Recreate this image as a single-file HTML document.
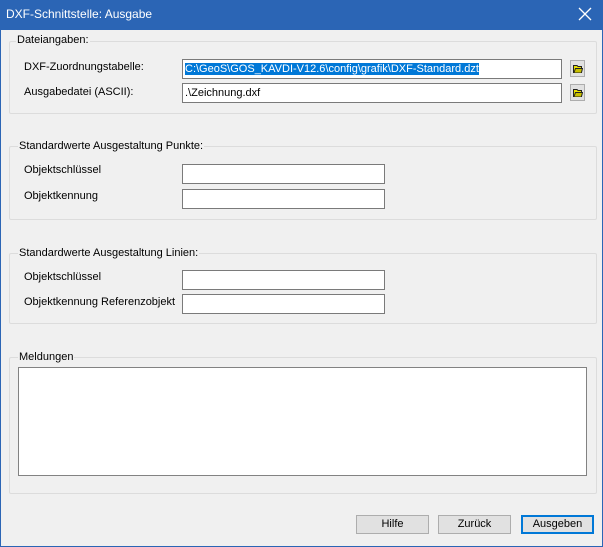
<!DOCTYPE html>
<html><head><style>
*{box-sizing:border-box;margin:0;padding:0}
body{width:603px;height:547px;overflow:hidden;background:#f0f0f0;font-family:"Liberation Sans",sans-serif;font-size:11px;color:#000;position:relative}
.frame{position:absolute;left:0;top:0;width:603px;height:547px;border:1px solid #2b65b5}
.title{position:absolute;left:0;top:0;width:603px;height:30px;background:#2b65b5;color:#fff;font-size:12px;line-height:28px;padding-left:6px}
.x{position:absolute;right:10px;top:6px;width:16px;height:16px}
.g{position:absolute;border:1px solid #dcdcdc;border-radius:2px}
.gl{position:absolute;background:#f0f0f0;padding:0 1px;line-height:13px}
.l{position:absolute;line-height:14px}
.in{position:absolute;background:#fff;border:1px solid #7a7a7a;height:20px;line-height:18px;padding-left:2px;white-space:nowrap;overflow:hidden}
.sel{background:#0078d7;color:#fff}
.fb{position:absolute;width:15px;height:17px;border:1px solid #adadad;background:#e1e1e1}
.fb svg{position:absolute;left:2px;top:3px}
.btn{position:absolute;top:515px;width:73px;height:19px;border:1px solid #adadad;background:#e1e1e1;text-align:center;line-height:17px}
</style></head><body>
<div class="frame"></div>
<div class="title">DXF-Schnittstelle: Ausgabe
<svg class="x" viewBox="0 0 16 16"><path d="M2 2L14 14M14 2L2 14" stroke="#fff" stroke-width="1.3"/></svg></div>

<div class="g" style="left:9px;top:41px;width:588px;height:73px"></div>
<div class="gl" style="left:16px;top:34px">Dateiangaben:</div>
<div class="l" style="left:24px;top:60px">DXF-Zuordnungstabelle:</div>
<div class="in" style="left:182px;top:59px;width:380px"><span class="sel">C:\GeoS\GOS_KAVDI-V12.6\config\grafik\DXF-Standard.dzt</span></div>
<div class="fb" style="left:570px;top:60px"><svg width="10" height="10" viewBox="0 0 10 10"><path d="M0.5 1.5H4L5 2.5H8.5V8.5H0.5Z" fill="#e8e000" stroke="#222"/><path d="M1 8.5L2.5 4.5H9.5L8.5 8.5" fill="#c8c000" stroke="#222"/></svg></div>
<div class="l" style="left:24px;top:85px">Ausgabedatei (ASCII):</div>
<div class="in" style="left:182px;top:83px;width:380px">.\Zeichnung.dxf</div>
<div class="fb" style="left:570px;top:84px"><svg width="10" height="10" viewBox="0 0 10 10"><path d="M0.5 1.5H4L5 2.5H8.5V8.5H0.5Z" fill="#e8e000" stroke="#222"/><path d="M1 8.5L2.5 4.5H9.5L8.5 8.5" fill="#c8c000" stroke="#222"/></svg></div>

<div class="g" style="left:9px;top:146px;width:588px;height:74px"></div>
<div class="gl" style="left:18px;top:140px">Standardwerte Ausgestaltung Punkte:</div>
<div class="l" style="left:24px;top:163px">Objektschlüssel</div>
<div class="in" style="left:182px;top:164px;width:203px"></div>
<div class="l" style="left:24px;top:189px">Objektkennung</div>
<div class="in" style="left:182px;top:189px;width:203px"></div>

<div class="g" style="left:9px;top:253px;width:588px;height:71px"></div>
<div class="gl" style="left:18px;top:247px">Standardwerte Ausgestaltung Linien:</div>
<div class="l" style="left:24px;top:270px">Objektschlüssel</div>
<div class="in" style="left:182px;top:270px;width:203px"></div>
<div class="l" style="left:24px;top:295px">Objektkennung Referenzobjekt</div>
<div class="in" style="left:182px;top:294px;width:203px"></div>

<div class="g" style="left:9px;top:357px;width:588px;height:137px"></div>
<div class="gl" style="left:18px;top:351px">Meldungen</div>
<div class="in" style="left:18px;top:367px;width:569px;height:109px;border-color:#828282"></div>

<div class="btn" style="left:356px">Hilfe</div>
<div class="btn" style="left:438px">Zurück</div>
<div class="btn" style="left:521px;border:2px solid #0078d7;line-height:15px">Ausgeben</div>
</body></html>
